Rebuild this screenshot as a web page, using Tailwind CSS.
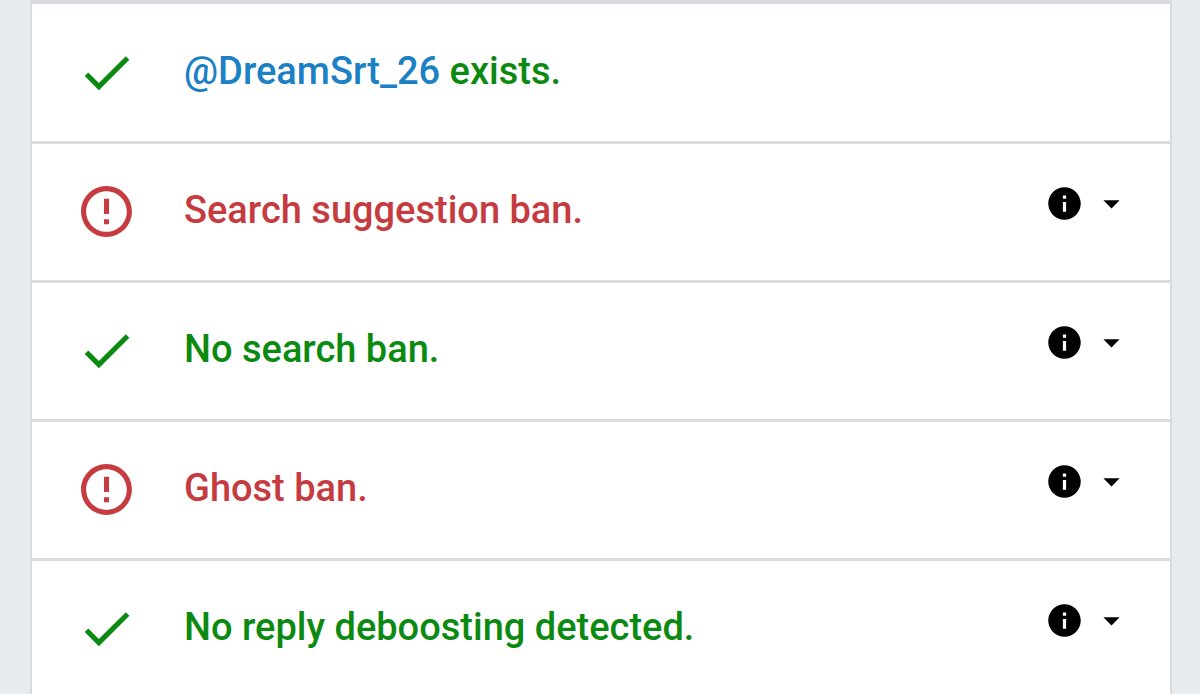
<!DOCTYPE html>
<html lang="en">
<head>
  <meta charset="UTF-8" />
  <meta name="viewport" content="width=device-width, initial-scale=1.0" />
  <title>Shadowban Test</title>
  <script src="https://cdn.jsdelivr.net/npm/@tailwindcss/browser@4"></script>
</head>
<body class="bg-[#e6ebef] min-h-screen overflow-hidden font-['Roboto',sans-serif]">
  <!-- icon shapes -->
  <svg class="hidden" aria-hidden="true">
    <symbol id="check" viewBox="0 0 24 24"><path d="M9 16.17 4.83 12l-1.42 1.41L9 19 21 7l-1.41-1.41z" /></symbol>
    <symbol id="error" viewBox="0 0 24 24"><path d="M11 15h2v2h-2zm0-8h2v6h-2zm.99-5C6.47 2 2 6.48 2 12s4.47 10 9.99 10C17.52 22 22 17.52 22 12S17.52 2 11.99 2zM12 20c-4.42 0-8-3.58-8-8s3.58-8 8-8 8 3.58 8 8-3.58 8-8 8z" /></symbol>
    <symbol id="info" viewBox="0 0 24 24"><path d="M12 2C6.48 2 2 6.48 2 12s4.48 10 10 10 10-4.48 10-10S17.52 2 12 2zm1 15h-2v-6h2v6zm0-8h-2V7h2v2z" /></symbol>
    <symbol id="caret" viewBox="0 0 24 24"><path d="m7 10 5 5 5-5z" /></symbol>
  </svg>

  <main class="ml-[30px] mr-7 border-x-2 border-t-4 border-[#dadbde] bg-white">
    <ul class="pt-px text-[38px] leading-[46px] font-medium">
      <li class="flex items-center h-[139px] pl-11 pr-[39px] pb-0.5 border-b-3 border-[#dcdcde] text-[#0b8a12]">
        <svg class="size-[61px] mr-[47px] shrink-0 fill-current"><use href="#check" /></svg>
        <p class="flex-1 pb-0.5"><a href="#" class="text-[#1b80c4]">@DreamSrt_26</a> exists.</p>
      </li>
      <li class="flex items-center h-[139px] pl-11 pr-[39px] pb-0.5 border-b-3 border-[#dcdcde] text-[#c53b3f]">
        <svg class="size-[61px] mr-[47px] shrink-0 fill-current"><use href="#error" /></svg>
        <p class="flex-1 pb-0.5">Search suggestion ban.</p>
        <button type="button" aria-label="Details" class="flex gap-2 pb-4 text-black">
          <svg class="size-[39px] fill-current"><use href="#info" /></svg>
          <svg class="size-[39px] fill-current"><use href="#caret" /></svg>
        </button>
      </li>
      <li class="flex items-center h-[139px] pl-11 pr-[39px] pb-0.5 border-b-3 border-[#dcdcde] text-[#0b8a12]">
        <svg class="size-[61px] mr-[47px] shrink-0 fill-current"><use href="#check" /></svg>
        <p class="flex-1 pb-0.5">No search ban.</p>
        <button type="button" aria-label="Details" class="flex gap-2 pb-4 text-black">
          <svg class="size-[39px] fill-current"><use href="#info" /></svg>
          <svg class="size-[39px] fill-current"><use href="#caret" /></svg>
        </button>
      </li>
      <li class="flex items-center h-[139px] pl-11 pr-[39px] pb-0.5 border-b-3 border-[#dcdcde] text-[#c53b3f]">
        <svg class="size-[61px] mr-[47px] shrink-0 fill-current"><use href="#error" /></svg>
        <p class="flex-1 pb-0.5">Ghost ban.</p>
        <button type="button" aria-label="Details" class="flex gap-2 pb-4 text-black">
          <svg class="size-[39px] fill-current"><use href="#info" /></svg>
          <svg class="size-[39px] fill-current"><use href="#caret" /></svg>
        </button>
      </li>
      <li class="flex items-center h-[139px] pl-11 pr-[39px] pb-0.5 border-b-3 border-[#dcdcde] text-[#0b8a12]">
        <svg class="size-[61px] mr-[47px] shrink-0 fill-current"><use href="#check" /></svg>
        <p class="flex-1 pb-0.5">No reply deboosting detected.</p>
        <button type="button" aria-label="Details" class="flex gap-2 pb-4 text-black">
          <svg class="size-[39px] fill-current"><use href="#info" /></svg>
          <svg class="size-[39px] fill-current"><use href="#caret" /></svg>
        </button>
      </li>
    </ul>
  </main>
</body>
</html>
